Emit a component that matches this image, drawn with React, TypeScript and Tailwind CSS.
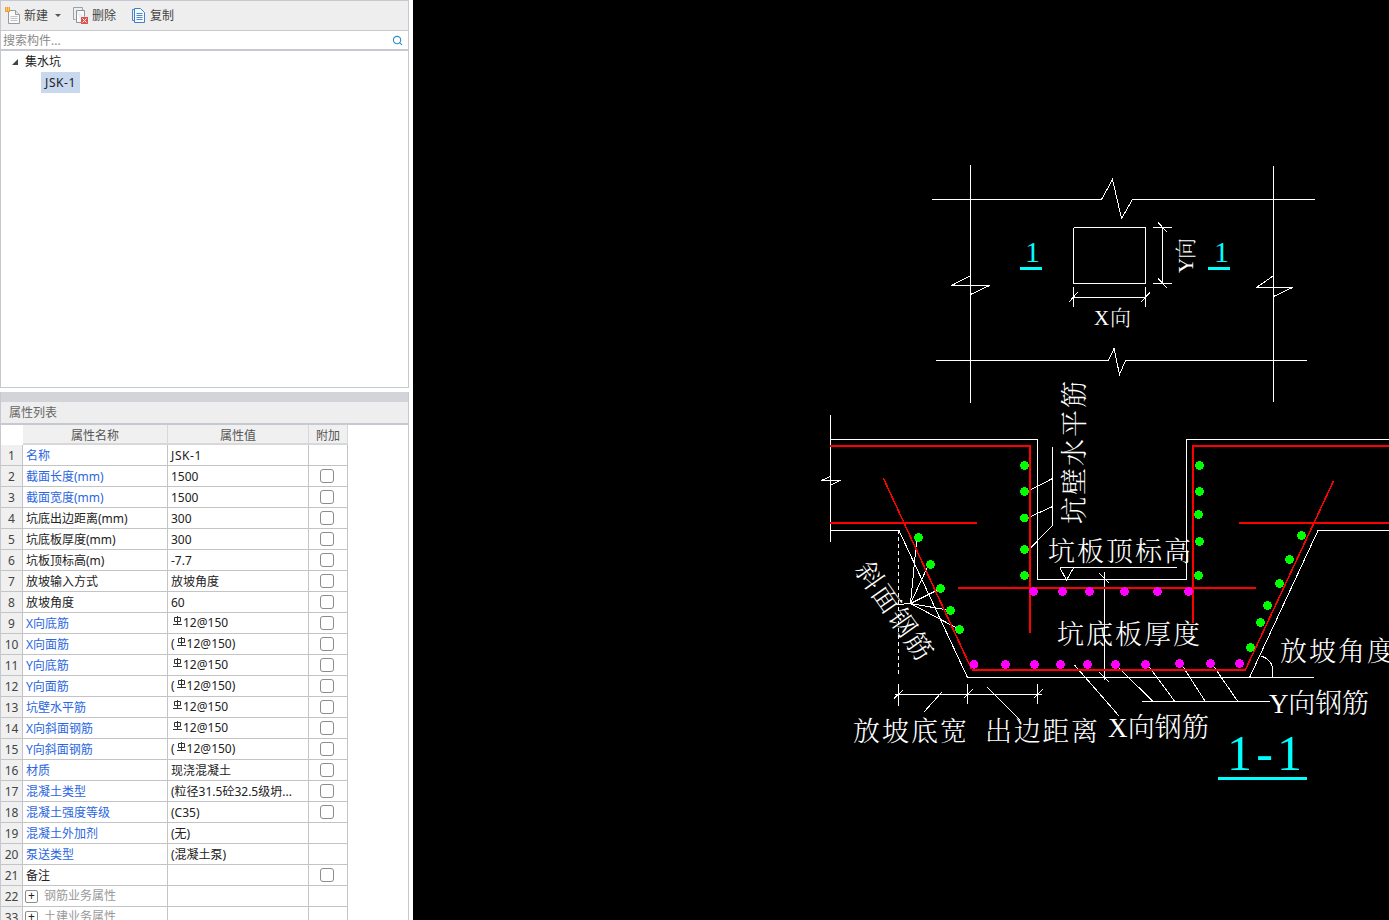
import { Search } from "lucide-react"

type Row = {
  n: number
  name: string
  value?: string
  blue?: boolean
  check?: boolean
  bar?: "plain" | "paren"
  group?: boolean
}

const rows: Row[] = [
  { n: 1, name: "名称", value: "JSK-1", blue: true },
  { n: 2, name: "截面长度(mm)", value: "1500", blue: true, check: true },
  { n: 3, name: "截面宽度(mm)", value: "1500", blue: true, check: true },
  { n: 4, name: "坑底出边距离(mm)", value: "300", check: true },
  { n: 5, name: "坑底板厚度(mm)", value: "300", check: true },
  { n: 6, name: "坑板顶标高(m)", value: "-7.7", check: true },
  { n: 7, name: "放坡输入方式", value: "放坡角度", check: true },
  { n: 8, name: "放坡角度", value: "60", check: true },
  { n: 9, name: "X向底筋", bar: "plain", blue: true, check: true },
  { n: 10, name: "X向面筋", bar: "paren", blue: true, check: true },
  { n: 11, name: "Y向底筋", bar: "plain", blue: true, check: true },
  { n: 12, name: "Y向面筋", bar: "paren", blue: true, check: true },
  { n: 13, name: "坑壁水平筋", bar: "plain", blue: true, check: true },
  { n: 14, name: "X向斜面钢筋", bar: "plain", blue: true, check: true },
  { n: 15, name: "Y向斜面钢筋", bar: "paren", blue: true, check: true },
  { n: 16, name: "材质", value: "现浇混凝土", blue: true, check: true },
  { n: 17, name: "混凝土类型", value: "(粒径31.5砼32.5级坍...", blue: true, check: true },
  { n: 18, name: "混凝土强度等级", value: "(C35)", blue: true, check: true },
  { n: 19, name: "混凝土外加剂", value: "(无)", blue: true },
  { n: 20, name: "泵送类型", value: "(混凝土泵)", blue: true },
  { n: 21, name: "备注", check: true },
  { n: 22, name: "钢筋业务属性", group: true },
  { n: 33, name: "土建业务属性", group: true },
]

function NewIcon() {
  return (
    <svg width="16" height="17" viewBox="0 0 16 17" className="shrink-0">
      <path d="M3.5 3.5h7l4 4v9h-11z" fill="#fafafa" stroke="#9a9a9a" />
      <path d="M10.5 3.5v4h4" fill="#e4e4e4" stroke="#9a9a9a" />
      <path d="M5.5 9.5h7M5.5 11.5h7M5.5 13.5h7" stroke="#c4c4c4" />
      <rect x="0" y="0" width="5" height="5" fill="#f0a030" />
      <path d="M1 1h1M3 3h1M3 1h1M1 3h1" stroke="#fff2c8" />
    </svg>
  )
}

function DeleteIcon() {
  return (
    <svg width="16" height="17" viewBox="0 0 16 17" className="shrink-0">
      <path d="M0.5 0.5h9v3M0.5 0.5v12h2" fill="none" stroke="#9aa3ab" />
      <path d="M3.5 3.5h8v6M3.5 3.5v12h5" fill="#fafafa" stroke="#8b949c" />
      <rect x="8" y="10" width="7" height="7" fill="#d9534f" />
      <path d="M9.5 11.5l4 4M13.5 11.5l-4 4" stroke="#fff" />
    </svg>
  )
}

function CopyIcon() {
  return (
    <svg width="13" height="15" viewBox="0 0 13 15" className="shrink-0">
      <path d="M0.5 1.5h2M0.5 1.5v11h2" fill="none" stroke="#4a88cc" />
      <path d="M2.5 0.5h6l4 4v10h-10z" fill="#f6faff" stroke="#3f80c8" />
      <path d="M4.5 5.5h6M4.5 7.5h6M4.5 9.5h6M4.5 11.5h6" stroke="#4a88cc" />
    </svg>
  )
}

function BarSymbol() {
  return (
    <svg width="9" height="10" viewBox="0 0 9 10" className="shrink-0 -translate-y-[2px]">
      <path d="M1.5 1.5h6v4h-6zM4.5 0v8M0 8.5h9" fill="none" stroke="#333" />
    </svg>
  )
}

function Cell({ row }: { row: Row }) {
  if (row.bar) {
    return (
      <div className="flex h-[20px] items-center pl-[3px] text-[#222]">
        <span className={row.bar === "paren" ? "mr-[2px]" : "mr-[2px] hidden"}>(</span>
        <span className={row.bar === "plain" ? "ml-[2px]" : ""}>
          <BarSymbol />
        </span>
        <span className="ml-[1px]">12@150{row.bar === "paren" ? ")" : ""}</span>
      </div>
    )
  }
  return <div className={`truncate pl-[3px] text-[#222] ${row.n === 1 ? "tracking-[0.6px]" : ""}`}>{row.value}</div>
}

function PropertyRow({ row }: { row: Row }) {
  return (
    <div className="grid h-[21px] grid-cols-[22px_145px_141px_39px] grid-rows-[21px] text-xs leading-[22px]">
      <div className="border-r border-b border-[#c4c4c4] bg-[#f0f0f0] text-center text-[#444]">{row.n}</div>
      <div className="border-r border-b border-[#c4c4c4]">
        {row.group ? (
          <div className="flex h-[20px] items-center pl-[2px]">
            <span className="flex h-[13px] w-[13px] items-center justify-center rounded-[2px] border border-[#8c8c8c] text-[12px] leading-none text-[#222]">
              +
            </span>
            <span className="ml-[6px] text-[#9a9a9a]">{row.name}</span>
          </div>
        ) : (
          <div className={`pl-[3px] ${row.blue ? "text-[#2a66e0]" : "text-[#222]"}`}>{row.name}</div>
        )}
      </div>
      <div className="border-r border-b border-[#c4c4c4]">
        <Cell row={row} />
      </div>
      <div className="flex items-center justify-center border-r border-b border-[#c4c4c4] pr-[2px]">
        {row.check && <span className="h-[14px] w-[14px] rounded-[3px] border border-[#8c8c8c] bg-white" />}
      </div>
    </div>
  )
}

function CadText({
  x,
  y,
  w,
  size = 27,
  rotate,
  cyan,
  children,
}: {
  x: number
  y: number
  w: number
  size?: number
  rotate?: number
  cyan?: boolean
  children: string
}) {
  return (
    <text
      x={x}
      y={y}
      fontSize={size}
      textLength={w}
      lengthAdjust="spacing"
      transform={rotate ? `rotate(${rotate} ${x} ${y})` : undefined}
      className={`font-['Liberation_Serif','Noto_Serif_CJK_SC','Noto_Sans_CJK_SC',serif] font-light ${cyan ? "fill-[#00ffff]" : "fill-white"}`}
    >
      {children}
    </text>
  )
}

const whiteLines = [
  // plan
  "970.5,165 970.5,403",
  "1273.5,166 1273.5,402",
  "932,199.5 1101.5,199.5 1112.5,179.5 1121.5,218.5 1132.5,199.5 1315,199.5",
  "936,360.5 1108.5,360.5 1114,348.5 1119.5,374.5 1125.5,360.5 1307,360.5",
  "970,276 951.5,285.5 989.5,285.5 970.5,294.5",
  "1273,276 1256.5,287.5 1292.5,287.5 1273.5,296.5",
  "1073.5,227.5 1145.5,227.5 1145.5,283.5 1073.5,283.5 1073.5,227.5",
  "1153,227.5 1171.5,227.5",
  "1153,283.5 1171.5,283.5",
  "1162.5,227 1162.5,284",
  "1158,222.5 1167.5,232.5",
  "1158,278.5 1167.5,288.5",
  "1073.5,287 1073.5,307",
  "1145.5,287 1145.5,307",
  "1073,297.5 1146,297.5",
  "1068.5,302.5 1077.5,292.5",
  "1140.5,302.5 1150,292.5",
  // section outline
  "830.5,415 830.5,542",
  "830,439.5 1037.5,439.5 1037.5,579.5 1186.5,579.5 1186.5,439.5 1389,439.5",
  "830,530.5 899,530.5 967.5,677.5 1314,677.5",
  "1249.5,677.5 1318,530.5 1389,530.5",
  "830.5,476.5 821.5,480.5 840.5,480.5 830.5,485",
  // dimensions under the slab
  "895,694.5 1042,694.5",
  "898.5,684 898.5,706",
  "967.5,684 967.5,704",
  "1037.5,684 1037.5,704",
  "894,698.5 903.5,689.5",
  "963.5,698.5 972.5,689.5",
  "1033.5,698.5 1042.5,689.5",
  "941.5,692.5 923.5,712.5",
  "987.5,687.5 1020,720",
  // thickness
  "1104.5,572 1104.5,680",
  "1099.5,573.5 1109.5,583.5",
  "1099.5,672.5 1109.5,682.5",
  "1060,567.5 1177,567.5",
  "1060,568 1066.5,580 1073.5,568",
  // wall bar leaders
  "1052.5,446.5 1052.5,525.5 1028.5,550",
  "1052.5,478.5 1028.5,491",
  "1052.5,506.5 1028.5,517.5",
  // slope bar leaders
  "897.5,604.5 910.5,603.5 940.5,588.5",
  "910.5,603.5 950.5,610.5",
  "910.5,603.5 959.5,629.5",
  "910.5,603.5 916.5,541.5",
  "910.5,603.5 928,566",
  // Y bar leaders
  "1141.5,701.5 1270,701.5",
  "1118.5,667.5 1152.5,701",
  "1149.5,667.5 1174.5,701",
  "1183.5,667.5 1205,701",
  "1214.5,667.5 1237.5,701",
  // X bar leader
  "1074.5,665 1119,716",
]

const redThick = [
  "830,446 1030,446 1030,633",
  "1389,446 1193,446 1193,623",
  "830,523 977,523",
  "1239,523 1389,523",
  "958,588 1256,588",
  "971.5,670 1245.5,670",
]

const redThin = ["883.5,478.5 971.5,669", "1245.5,669.5 1333.5,481"]

const greenDots = [
  [1024.5, 465.5], [1024.5, 491.5], [1024.5, 518], [1024.5, 549.5], [1024.5, 575.5],
  [1199.5, 465.5], [1199.5, 491.5], [1198.5, 514.5], [1199.5, 541.5], [1198.5, 575.5],
  [1301.5, 535.5], [1289.5, 559.5], [1279.5, 583.5], [1267.5, 605.5], [1260.5, 622.5], [1250.5, 647.5],
  [918.5, 537.5], [930.5, 564.5], [940.5, 588.5], [950.5, 610.5], [959.5, 629.5],
]

const magentaDots = [
  [1033.5, 591.5], [1062.5, 591.5], [1089.5, 591.5], [1124.5, 591.5], [1157.5, 591.5], [1188.5, 591.5],
  [974, 664.5], [1005.5, 664.5], [1034.5, 664.5], [1060.5, 664.5], [1087.5, 664.5],
  [1115.5, 664.5], [1145.5, 664.5], [1179.5, 663.5], [1210.5, 663.5], [1239.5, 663.5],
]

function Drawing() {
  return (
    <svg width="976" height="920" viewBox="413 0 976 920" className="block">
      <g fill="none" stroke="#fff" strokeWidth="1" shapeRendering="crispEdges">
        {whiteLines.map((p) => (
          <polyline key={p} points={p} />
        ))}
        <line x1="898.5" y1="530" x2="898.5" y2="677" strokeDasharray="4 3" />
        <path d="M1261 656 Q1275 660 1272.5 677" />
      </g>
      <g fill="none" stroke="#ff0000" shapeRendering="crispEdges">
        {redThick.map((p) => (
          <polyline key={p} points={p} strokeWidth="2" />
        ))}
        {redThin.map((p) => (
          <polyline key={p} points={p} strokeWidth="1.5" />
        ))}
      </g>
      <g shapeRendering="crispEdges">
        {greenDots.map(([cx, cy]) => (
          <circle key={`${cx}-${cy}`} cx={cx} cy={cy} r="4.3" fill="#00ff00" />
        ))}
        {magentaDots.map(([cx, cy]) => (
          <circle key={`${cx}-${cy}`} cx={cx} cy={cy} r="4.3" fill="#ff00ff" />
        ))}
        <rect x="1020" y="267" width="22" height="3" fill="#00ffff" />
        <rect x="1208" y="267" width="22" height="3" fill="#00ffff" />
        <rect x="1218" y="777" width="89" height="3" fill="#00ffff" />
      </g>
      <CadText x={1025} y={262} w={15} size={30} cyan>1</CadText>
      <CadText x={1214} y={262} w={15} size={30} cyan>1</CadText>
      <CadText x={1227} y={770} w={75} size={50} cyan>1-1</CadText>
      <CadText x={1094} y={325} w={37} size={21}>X向</CadText>
      <CadText x={1193} y={273} w={35} size={21} rotate={-90}>Y向</CadText>
      <CadText x={1084} y={524} w={143} rotate={-90}>坑壁水平筋</CadText>
      <CadText x={1048} y={561} w={143}>坑板顶标高</CadText>
      <CadText x={1057} y={644} w={143}>坑底板厚度</CadText>
      <CadText x={1280} y={661} w={114}>放坡角度</CadText>
      <CadText x={1269} y={713} w={100}>Y向钢筋</CadText>
      <CadText x={1108} y={737} w={101}>X向钢筋</CadText>
      <CadText x={853} y={741} w={114}>放坡底宽</CadText>
      <CadText x={985} y={741} w={113}>出边距离</CadText>
      <CadText x={854} y={570} w={113} rotate={55}>斜面钢筋</CadText>
    </svg>
  )
}

export default function App() {
  return (
    <div className="flex h-[920px] w-full overflow-hidden bg-black font-['Noto_Sans','Noto_Sans_CJK_SC',sans-serif] text-xs">
      <aside className="w-[413px] shrink-0 bg-white">
        <div className="w-[409px]">
          {/* component tree */}
          <section className="h-[388px] border border-[#c6c9cf]">
            <div className="flex h-[30px] items-center border-b border-[#c6c9cf] bg-[#eeeeee] pl-[4px] text-[#444]">
              <NewIcon />
              <span className="ml-[3px]">新建</span>
              <span className="ml-[7px] h-0 w-0 border-x-[3px] border-t-[3px] border-x-transparent border-t-[#555]" />
              <span className="ml-[12px]">
                <DeleteIcon />
              </span>
              <span className="ml-[3px]">删除</span>
              <span className="ml-[16px]">
                <CopyIcon />
              </span>
              <span className="ml-[5px]">复制</span>
            </div>
            <div className="flex h-[20px] items-center justify-between border-b-2 border-[#c6c9cf] pl-[2px] pr-[5px] text-[#8a8a8a]">
              <span className="mt-[2px]">搜索构件...</span>
              <Search size={11} strokeWidth={2.4} className="text-[#2c8fc9]" />
            </div>
            <div className="text-[#222]">
              <div className="flex h-[21px] items-center pl-[11px]">
                <span className="h-0 w-0 border-b-[6px] border-l-[6px] border-b-[#444] border-l-transparent" />
                <span className="ml-[7px]">集水坑</span>
              </div>
              <div className="pl-[40px]">
                <span className="block h-[21px] w-[39px] bg-[#c7d8ef] pl-[4px] leading-[21px] tracking-[0.6px]">JSK-1</span>
              </div>
            </div>
          </section>

          {/* property list */}
          <section className="mt-[4px] h-[528px] overflow-hidden border-x border-[#c6c9cf]">
            <div className="h-[10px] bg-[#d3d4d9]" />
            <div className="h-[23px] border-b-2 border-[#c6c9cf] bg-[#eeeeee] pl-[8px] leading-[21px] text-[#666]">
              属性列表
            </div>
            <div className="grid h-[20px] grid-cols-[22px_145px_141px_39px] grid-rows-[20px] text-center leading-[21px] text-[#555]">
              <div />
              <div className="border-r border-b-2 border-[#d8d8d8] bg-[#f0f0f0]">属性名称</div>
              <div className="border-r border-b-2 border-[#d8d8d8] bg-[#f0f0f0]">属性值</div>
              <div className="border-r border-b-2 border-[#d8d8d8] bg-[#f0f0f0]">附加</div>
            </div>
            {rows.map((row) => (
              <PropertyRow key={row.n} row={row} />
            ))}
          </section>
        </div>
      </aside>
      <main className="flex-1 bg-black">
        <Drawing />
      </main>
    </div>
  )
}
